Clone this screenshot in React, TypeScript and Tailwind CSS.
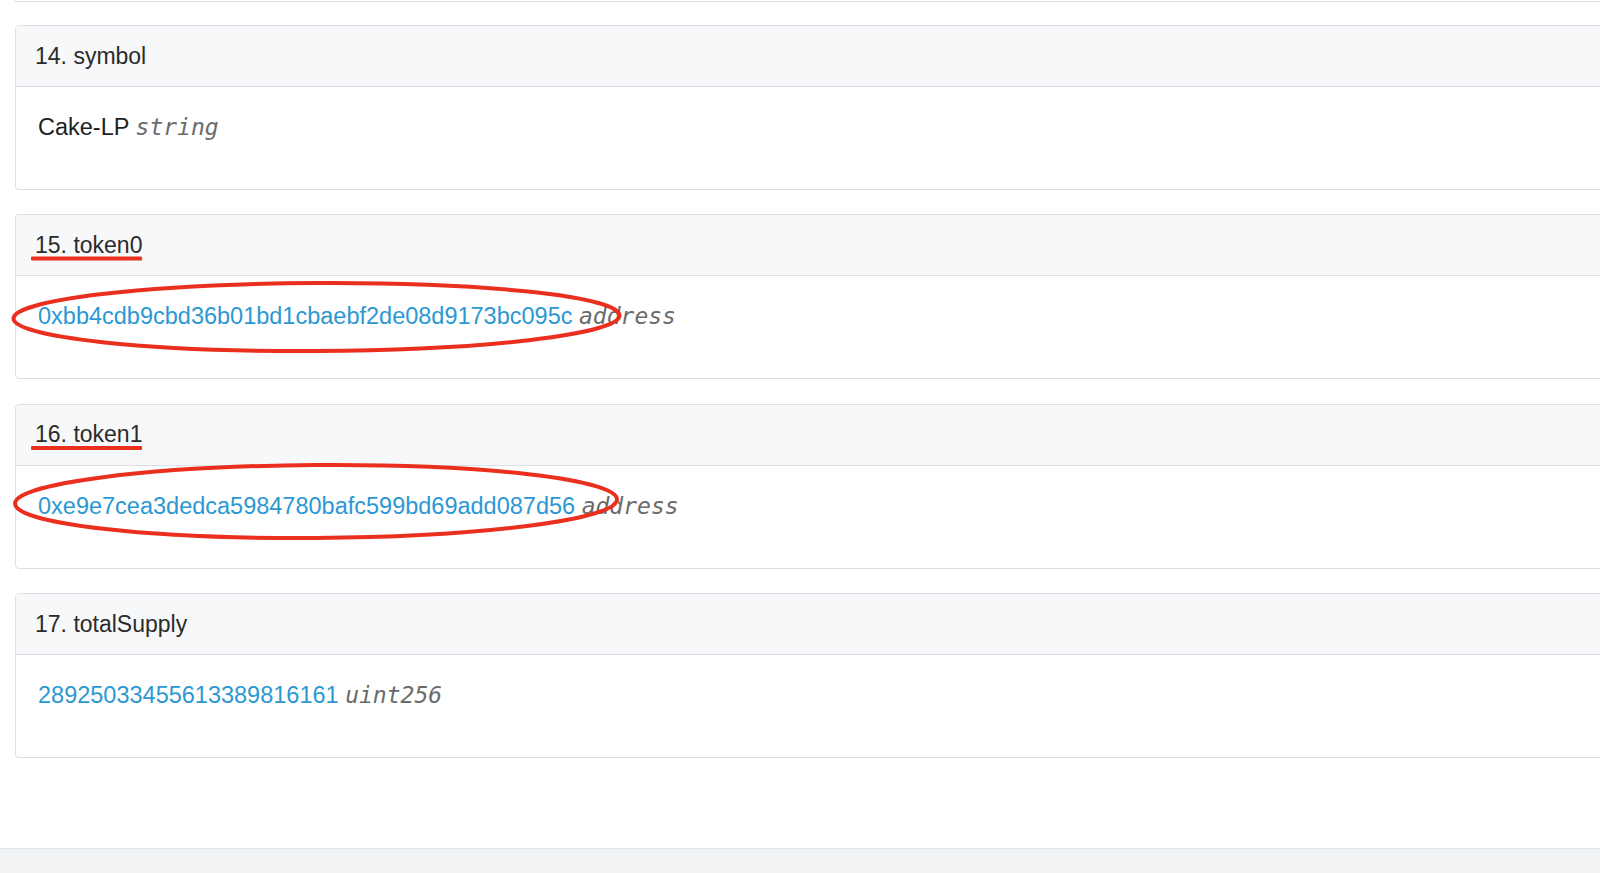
import React from 'react';

type Field = {
  index: number;
  name: string;
  value: string;
  type: string;
  link?: boolean;
};

const fields: Field[] = [
  { index: 14, name: 'symbol', value: 'Cake-LP', type: 'string' },
  { index: 15, name: 'token0', value: '0xbb4cdb9cbd36b01bd1cbaebf2de08d9173bc095c', type: 'address', link: true },
  { index: 16, name: 'token1', value: '0xe9e7cea3dedca5984780bafc599bd69add087d56', type: 'address', link: true },
  { index: 17, name: 'totalSupply', value: '28925033455613389816161', type: 'uint256', link: true },
];

const sans = 'font-["Liberation_Sans",Helvetica,Arial,sans-serif]';
const mono = 'font-["DejaVu_Sans_Mono","Liberation_Mono",monospace]';

const FieldCard: React.FC<{ field: Field }> = ({ field }) => (
  <div className="w-[calc(100%+40px)] border border-[#dcdfe3] rounded-[4px] overflow-hidden">
    <div className="h-[61px] flex items-center px-[19px] bg-[#f7f8f9] border-b border-[#dcdfe3] text-[23px] text-[#2b2b2b]">
      {field.index}. {field.name}
    </div>
    <div className="h-[102px] px-[22px] pt-[26px] leading-[28px] text-[23.5px]">
      <span className={field.link ? 'text-[#2b98d3]' : 'text-[#1f1f1f]'}>{field.value}</span>{' '}
      <span className={`${mono} italic text-[23px] text-[#6b6b6b]`}>{field.type}</span>
    </div>
  </div>
);

// red pen marks drawn on top of the list
const Marks: React.FC = () => (
  <svg className="absolute inset-0 pointer-events-none" width="1600" height="873" viewBox="0 0 1600 873">
    <g fill="none" stroke="#ea2f1f" strokeWidth="4">
      <ellipse cx="316.5" cy="317" rx="303" ry="34" transform="rotate(-0.3 316.5 317)" />
      <ellipse cx="316" cy="501.5" rx="301" ry="36.5" transform="rotate(-0.4 316 501.5)" />
    </g>
    <g fill="#ea2f1f">
      <rect x="31" y="256.5" width="111" height="4" rx="1" />
      <rect x="31" y="446" width="111" height="4" rx="1" />
    </g>
  </svg>
);

export default function App() {
  return (
    <div className={`relative w-full h-[873px] overflow-hidden bg-white flex flex-col ${sans}`}>
      <div className="flex-1 pl-[15px]">
        {/* tail of the previous card */}
        <div className="w-[calc(100%+40px)] h-[2px] border-x border-b border-[#dcdfe3] rounded-b-[4px]" />
        <div className="mt-[23px] flex flex-col gap-[24.3px]">
          {fields.map((f) => (
            <FieldCard key={f.index} field={f} />
          ))}
        </div>
      </div>
      <div className="h-[25px] bg-[#f2f3f5] border-t border-[#e3e5ee]" />
      <Marks />
    </div>
  );
}
